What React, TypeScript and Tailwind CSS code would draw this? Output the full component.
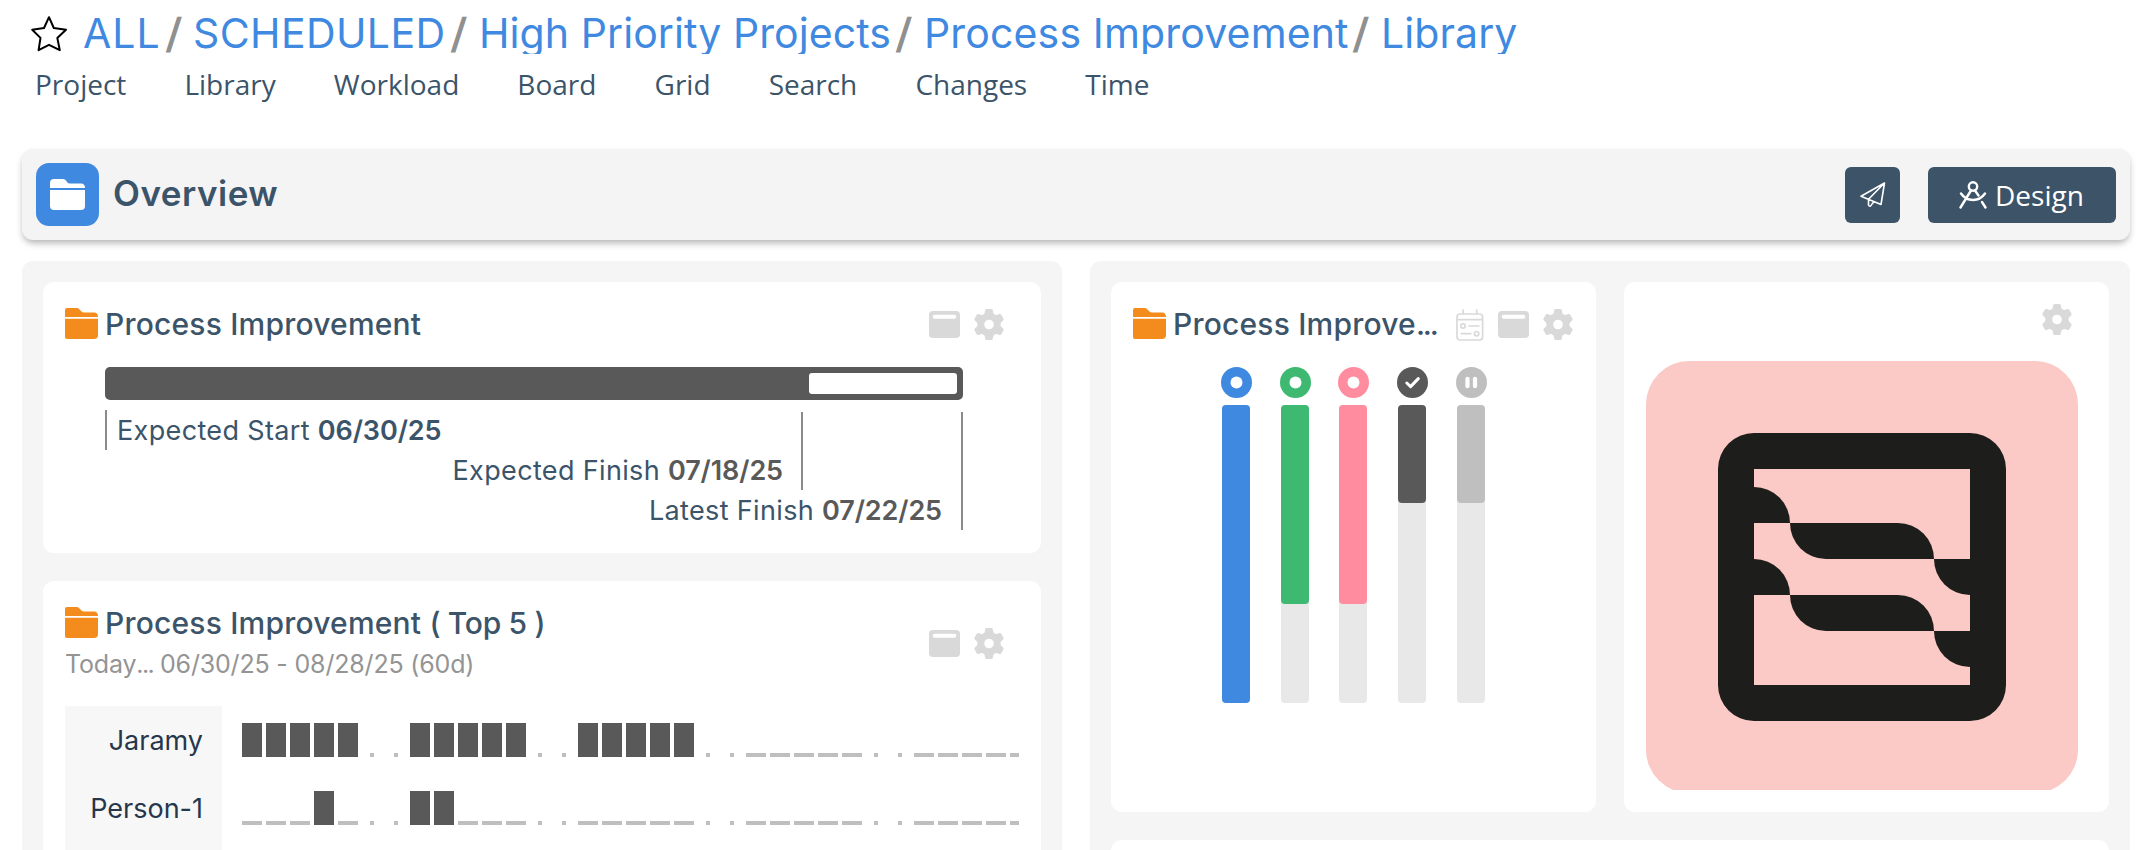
import type { ReactNode } from "react";
import clsx from "clsx";

interface Crumb {
  label: string;
  cls: string;
}

interface StatusBar {
  icon: "dot" | "check" | "pause";
  color: string;
  bg: string;
  height: number;
}

const CRUMBS: Crumb[] = [
  { label: "ALL", cls: "w-[76px] tracking-[1px]" },
  { label: "SCHEDULED", cls: "w-[251px] -ml-[1px] tracking-[0.4px]" },
  { label: "High Priority Projects", cls: "w-[410px] tracking-[0.08px]" },
  { label: "Process Improvement", cls: "w-[422px] tracking-[0.15px]" },
  { label: "Library", cls: "w-[140px] tracking-[0.1px]" },
];

const TABS = ["Project", "Library", "Workload", "Board", "Grid", "Search", "Changes", "Time"];

const STATUSES: StatusBar[] = [
  { icon: "dot", color: "#3f89e1", bg: "bg-[#3f89e1]", height: 298 },
  { icon: "dot", color: "#3db971", bg: "bg-[#3db971]", height: 199 },
  { icon: "dot", color: "#ff8c9f", bg: "bg-[#ff8c9f]", height: 199 },
  { icon: "check", color: "#595959", bg: "bg-[#595959]", height: 98 },
  { icon: "pause", color: "#bfbfbf", bg: "bg-[#bfbfbf]", height: 98 },
];

// one character per day: # booked, _ free, . weekend
const WORKLOAD = [
  { name: "Jaramy", days: "#####..#####..#####.._____.._____" },
  { name: "Person-1", days: "___#_..##___.._____.._____.._____" },
];

function Star() {
  return (
    <svg width="38" height="38" viewBox="0 0 38 38" fill="none" stroke="#000" strokeWidth="2" strokeLinejoin="round">
      <path d="M19 2.2 L23.8 13 L36 14.7 L27.3 22.9 L29.8 35.2 L19 29.8 L8.6 35.2 L10.5 22.9 L2.2 14.7 L14 13 Z" />
    </svg>
  );
}

function Folder() {
  return (
    <svg width="33" height="31" viewBox="0 0 33 31" fill="#f48b1d" className="shrink-0">
      <path d="M0 9V2Q0 0 2 0H12Q13 0 14 1L16.5 3.5Q17.5 4.5 19 4.5H29Q33 4.5 33 9Z" />
      <path d="M0 10.8H33V27Q33 31 29 31H2Q0 31 0 29Z" />
    </svg>
  );
}

function Gear() {
  return (
    <svg width="30" height="31" viewBox="0 0 30 31" className="shrink-0">
      <path
        fill="#d9d9d9"
        fillRule="evenodd"
        d="M12.5 0H17.5Q18.6 0 18.8 1.2L19.3 4Q19.6 5 20.8 5.6Q21.8 6.2 22.8 5.9L25.2 5Q26.4 4.6 27.1 5.6L29.4 9.6Q30 10.8 29.1 11.6L27.2 13.2Q26.5 14 26.5 15.5T27.2 17.8L29.1 19.4Q30 20.2 29.4 21.4L27.1 25.4Q26.4 26.4 25.2 26L22.8 25.1Q21.8 24.8 20.8 25.4Q19.6 26 19.3 27L18.8 29.8Q18.6 31 17.5 31H12.5Q11.4 31 11.2 29.8L10.7 27Q10.4 26 9.2 25.4Q8.2 24.8 7.2 25.1L4.8 26Q3.6 26.4 2.9 25.4L.6 21.4Q0 20.2 .9 19.4L2.8 17.8Q3.5 17 3.5 15.5T2.8 13.2L.9 11.6Q0 10.8 .6 9.6L2.9 5.6Q3.6 4.6 4.8 5L7.2 5.9Q8.2 6.2 9.2 5.6Q10.4 5 10.7 4L11.2 1.2Q11.4 0 12.5 0ZM15 10.7A4.8 4.8 0 1 0 15 20.3A4.8 4.8 0 1 0 15 10.7Z"
      />
    </svg>
  );
}

function Panel() {
  return (
    <svg width="31" height="27" viewBox="0 0 31 27" className="shrink-0">
      <rect width="31" height="27" rx="4" fill="#d9d9d9" />
      <rect x="3.7" y="3.8" width="23.6" height="4" rx="2" fill="#fff" />
    </svg>
  );
}

function Calendar() {
  return (
    <svg width="28" height="32" viewBox="0 0 28 32" fill="none" stroke="#d9d9d9" strokeWidth="1.7" className="shrink-0">
      <rect x="1" y="5" width="25.6" height="26" rx="3" />
      <path d="M1 10.7H26.6M7 .5V5M20.8 .5V5M12.5 17H23.5M4.5 24.7H15.5" />
      <circle cx="7" cy="17" r="2.2" />
      <circle cx="20.6" cy="24.7" r="2.2" />
    </svg>
  );
}

function StatusIcon({ icon, color }: { icon: StatusBar["icon"]; color: string }) {
  return (
    <svg width="31" height="31" viewBox="0 0 31 31">
      <circle cx="15.5" cy="15.5" r="15.5" fill={color} />
      {icon === "dot" && <circle cx="15.5" cy="15.5" r="6" fill="#fff" />}
      {icon === "check" && (
        <path d="M9.8 16 L13.6 19.6 L21.3 11.6" fill="none" stroke="#fff" strokeWidth="3" strokeLinecap="round" strokeLinejoin="round" />
      )}
      {icon === "pause" && <path d="M11.5 11.8V19.2M19 11.8V19.2" stroke="#fff" strokeWidth="4.2" strokeLinecap="round" />}
    </svg>
  );
}

function Logo() {
  return (
    <svg width="432" height="429" viewBox="0 0 12 11.9167">
      <rect width="12" height="12" rx="1.2" fill="#fbc9c6" />
      <path
        fill="#1d1d1b"
        fillRule="evenodd"
        d="M3 2H9A1 1 0 0 1 10 3V9A1 1 0 0 1 9 10H3A1 1 0 0 1 2 9V3A1 1 0 0 1 3 2ZM3 3V9H9V3Z"
      />
      {[0, 2].map((y) => (
        <g key={y} transform={`translate(0 ${y})`} fill="#1d1d1b">
          <path d="M2.9 3.5H3A1 1 0 0 1 4 4.5H2.9Z" />
          <path d="M4 4.5H7A1 1 0 0 1 8 5.5H5A1 1 0 0 1 4 4.5Z" />
          <path d="M8 5.5H9.1V6.5H9A1 1 0 0 1 8 5.5Z" />
        </g>
      ))}
    </svg>
  );
}

function CardTitle({ children }: { children: ReactNode }) {
  return (
    <div className="flex h-[31px] items-center">
      <Folder />
      <h2 className="ml-[7px] pt-[2px] text-[30px] leading-[31px] font-medium tracking-[0.2px] whitespace-nowrap">{children}</h2>
    </div>
  );
}

function DateLabel({ label, date, className }: { label: string; date: string; className?: string }) {
  return (
    <span className="tracking-[0.35px] whitespace-nowrap">
      {label} <b className={clsx("font-semibold tracking-[-0.1px]", className)}>{date}</b>
    </span>
  );
}

function DayCell({ day }: { day: string }) {
  return (
    <div className="flex h-full w-5 shrink-0 items-end justify-center">
      <div className={clsx(day === "#" ? "h-full w-5 bg-[#595959]" : "h-1 bg-[#bfbfbf]", day === "_" && "w-5", day === "." && "w-1")} />
    </div>
  );
}

export default function App() {
  return (
    <div className="h-[850px] w-[2136px] overflow-hidden bg-white font-['Inter',sans-serif] text-[#3c5469]">
      <div className="flex h-[54px] overflow-hidden pt-[12px] pl-[30px] text-[41px] leading-[42px]">
        <div className="mt-[3px] mr-[15px] shrink-0">
          <Star />
        </div>
        {CRUMBS.map((c, i) => (
          <div key={c.label} className="flex">
            {i > 0 && <span className="w-[35px] -skew-x-3 pl-[7px] font-semibold text-[#909090]">/</span>}
            <span className={clsx("whitespace-nowrap text-[#3f89e1]", c.cls)}>{c.label}</span>
          </div>
        ))}
      </div>

      <nav className="flex h-[95px] gap-[58.1px] pt-[11px] pl-[35px] font-['Open_Sans',sans-serif] text-[28px] leading-[38px]">
        {TABS.map((t) => (
          <span key={t}>{t}</span>
        ))}
      </nav>

      <header className="ml-[22px] flex h-[91px] w-[2108px] items-center rounded-[11px] bg-[#f4f4f4] px-[14px] shadow-[0_4px_7px_-1px_rgba(0,0,0,0.3)]">
        <div className="flex size-[63px] items-center justify-center rounded-[13px] bg-[#3f89e1]">
          <svg width="35" height="31" viewBox="0 0 35 31" fill="#fff">
            <path d="M0 9V4Q0 0 4 0H13Q15 0 16 1.5L17 3Q18 4.5 20 4.5H31Q35 4.5 35 9Z" />
            <path d="M0 11H35V27Q35 31 31 31H4Q0 31 0 27Z" />
          </svg>
        </div>
        <h1 className="mb-[2px] ml-[14px] text-[35px] leading-none font-semibold tracking-[0.5px]">Overview</h1>
        <div className="ml-auto flex gap-7 font-['Open_Sans',sans-serif] text-[28px] font-medium text-white">
          <button className="flex h-14 w-[55px] items-center justify-center rounded-md bg-[#3c5368]">
            <svg width="26" height="26" viewBox="0 0 26 26" fill="none" stroke="#fff" strokeWidth="1.6" strokeLinejoin="round">
              <path d="M24.5 1 L1 14.2 L21 22.5 Z M24.5 1 L8.5 17.3 V23 Q10 26 12 22 L14 19.7" />
            </svg>
          </button>
          <button className="flex h-14 w-[188px] items-center rounded-md bg-[#3c5368] pl-[31px]">
            <svg width="28" height="28" viewBox="0 0 28 28" fill="none" stroke="#fff" strokeWidth="2.4" strokeLinecap="round">
              <circle cx="14" cy="5.5" r="4.2" />
              <path d="M12 9.5 L1.5 26.5 M16 9.5 L19.5 14.5 M23 21 L26.5 26.5 M2 12.5 Q6.5 19 14 19 T26 12.5" />
            </svg>
            <span className="ml-[8px]">Design</span>
          </button>
        </div>
      </header>

      <main className="mt-[21px] ml-[22px] flex gap-7">
        <section className="flex h-[640px] w-[1040px] flex-col gap-7 rounded-[11px] bg-[#f5f5f5] p-[21px]">
          <div className="h-[271px] shrink-0 rounded-[11px] bg-white pt-[26px] pl-[22px]">
            <div className="flex h-[31px] w-[940px] items-center justify-between">
              <CardTitle>Process Improvement</CardTitle>
              <div className="mt-[2px] mr-px flex items-center gap-[14px]">
                <Panel />
                <Gear />
              </div>
            </div>
            <div className="mt-7 ml-10 flex h-[33px] w-[858px] items-center justify-end rounded-[5px] bg-[#595959] pr-[6px]">
              <div className="h-[21px] w-[148px] rounded-[3px] bg-white" />
            </div>
            <div className="mt-[10px] ml-10 grid w-[858px] text-[27px] leading-10">
              <div className="col-start-1 row-start-1 h-10 border-l-2 border-[#8b8b8b] pt-px pl-[10px]">
                <DateLabel label="Expected Start" date="06/30/25" />
              </div>
              <div className="col-start-1 row-start-1 mt-[2px] flex h-[78px] w-[698px] justify-end border-r-2 border-[#8b8b8b] pt-[39px] pr-[18px]">
                <DateLabel label="Expected Finish" date="07/18/25" className="text-[#595959]" />
              </div>
              <div className="col-start-1 row-start-1 mt-[2px] flex h-[118px] justify-end border-r-2 border-[#8b8b8b] pt-[79px] pr-[19px]">
                <DateLabel label="Latest Finish" date="07/22/25" className="text-[#595959]" />
              </div>
            </div>
          </div>

          <div className="h-[400px] shrink-0 rounded-t-[11px] bg-white px-[22px] pt-[26px]">
            <div className="flex h-[99px] w-[940px] justify-between">
              <div>
                <CardTitle>
                  Process Improvement <span className="tracking-[-0.3px]">( Top 5 )</span>
                </CardTitle>
                <p className="mt-[8px] text-[25px] leading-[36px] tracking-[-0.18px] text-[#949494]">
                  Today<span className="tracking-[-1.6px]">...</span> 06/30/25 - 08/28/25 (60d)
                </p>
              </div>
              <div className="mt-[21px] mr-px flex h-[31px] items-center gap-[14px]">
                <Panel />
                <Gear />
              </div>
            </div>
            {WORKLOAD.map((w) => (
              <div key={w.name} className="flex h-[68px]">
                <div className="w-[157px] shrink-0 bg-[#f7f7f7] pr-[19px] text-right text-[27px] leading-[70px] text-[#26374c]">{w.name}</div>
                <div className="mt-[17px] ml-5 flex h-[34px] w-[777px] gap-1 overflow-hidden">
                  {w.days.split("").map((d, i) => (
                    <DayCell key={i} day={d} />
                  ))}
                </div>
              </div>
            ))}
            <div className="h-20 w-[157px] bg-[#f7f7f7]" />
          </div>
        </section>

        <section className="h-[640px] w-[1040px] rounded-[11px] bg-[#f5f5f5] px-[21px] pt-[21px]">
          <div className="flex gap-7">
            <div className="h-[530px] w-[485px] rounded-[11px] bg-white pt-[26px] pl-[22px]">
              <div className="flex h-[31px] w-[440px] items-center justify-between">
                <CardTitle>
                  Process Improve<span className="tracking-[-2.2px]">...</span>
                </CardTitle>
                <div className="mt-[2px] flex items-center gap-[14px]">
                  <Calendar />
                  <Panel />
                  <Gear />
                </div>
              </div>
              <div className="mt-7 ml-[88px] flex gap-[27.7px]">
                {STATUSES.map((s, i) => (
                  <div key={i} className="flex w-[31px] flex-col gap-[7px]">
                    <StatusIcon icon={s.icon} color={s.color} />
                    <div className="ml-px h-[298px] w-7 rounded bg-[#e8e8e8]">
                      <div className={clsx("rounded", s.bg)} style={{ height: s.height }} />
                    </div>
                  </div>
                ))}
              </div>
            </div>
            <div className="h-[530px] w-[485px] rounded-[11px] bg-white pt-[22px] pl-[22px]">
              <div className="mb-[26px] ml-[396px]">
                <Gear />
              </div>
              <Logo />
            </div>
          </div>
          <div className="mt-7 h-10 rounded-t-[11px] bg-white" />
        </section>
      </main>
    </div>
  );
}
